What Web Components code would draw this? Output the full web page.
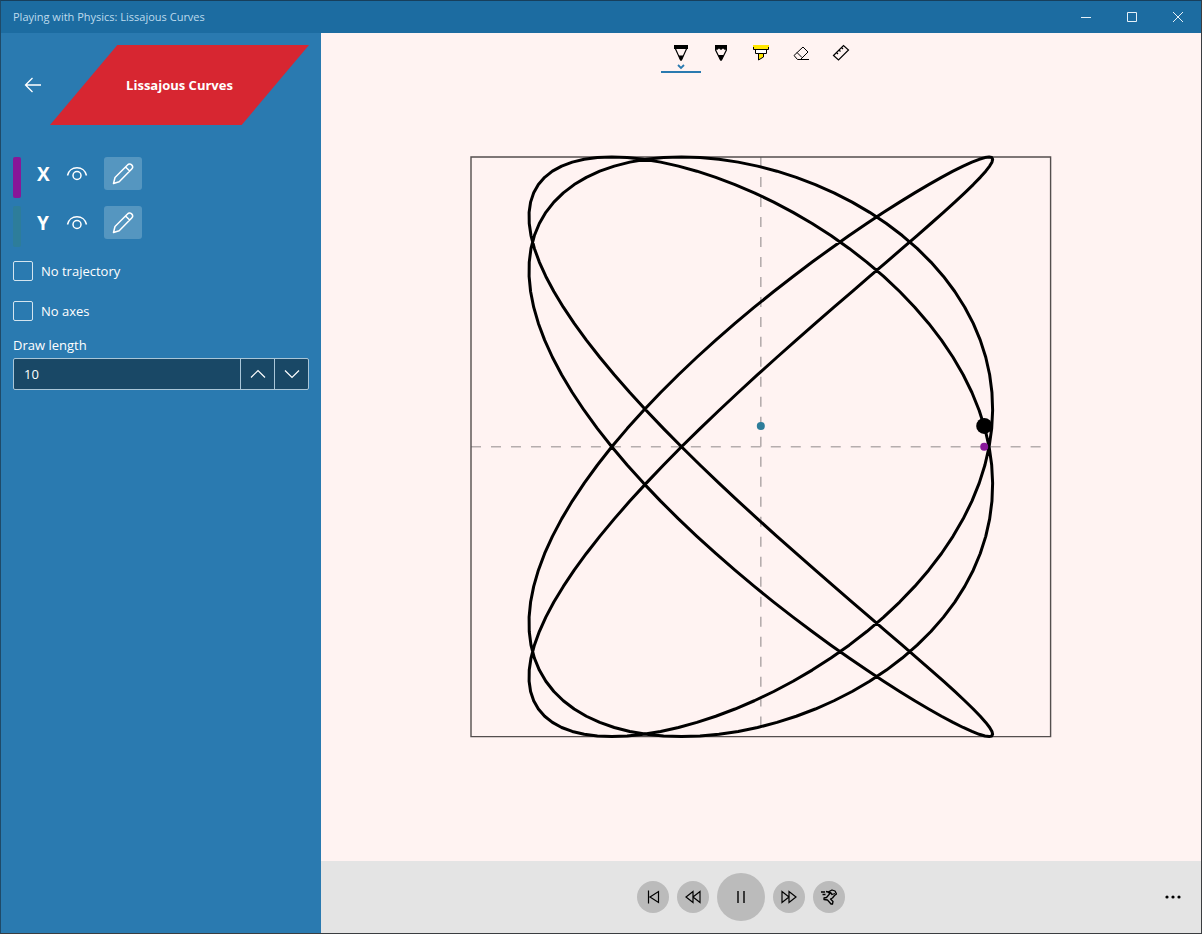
<!DOCTYPE html>
<html lang="en">
<head>
<meta charset="utf-8">
<title>Playing with Physics: Lissajous Curves</title>
<style>
html, body {
	height:100%;
	margin:0;
}
body {
	font-family:"Open Sans","Noto Sans",sans-serif;
	font-size:13px;
	line-height:20px;
	color:#fff;
}
</style>
</head>
<body>
<app-window caption="Playing with Physics: Lissajous Curves">
	<side-panel slot="side" heading="Lissajous Curves">
		<axis-row name="X" style="--axis-color:#881798"></axis-row>
		<axis-row name="Y" style="--axis-color:#2d7d9a"></axis-row>
		<check-option>No trajectory</check-option>
		<check-option>No axes</check-option>
		<number-stepper label="Draw length" value="10"></number-stepper>
	</side-panel>
	<ink-toolbar slot="tools"></ink-toolbar>
	<lissajous-plot slot="plot" x-frequency="4" y-frequency="3" phase="10"></lissajous-plot>
	<playback-bar slot="playback"></playback-bar>
</app-window>

<script>
const buttonReset = `
button {
	display:grid;
	place-items:center;
	margin:0;
	padding:0;
	border:0;
	background:none;
	color:inherit;
	font:inherit;
}
svg {
	display:block;
	fill:none;
	stroke:currentColor;
}`;

class BaseElement extends HTMLElement {
	constructor() {
		super();
		const template = document.createElement('template');
		template.innerHTML = this.template;
		this.attachShadow({mode: 'open'}).appendChild(template.content.cloneNode(true));
	}
}

class AppWindow extends BaseElement {
	get template() {
		return `
		<style>
		${buttonReset}
		:host {
			display:grid;
			grid-template:32px minmax(0, 1fr) 72px / 320px minmax(0, 1fr);
			box-sizing:border-box;
			height:100%;
			border:1px solid #3a3d40;
			border-top-color:#173f5c;
			border-left-color:#1f4a68;
			background:#fff3f2;
		}
		header {
			grid-column:1 / 3;
			display:flex;
			align-items:center;
			background:#1c6ca1;
			color:#bedbed;
			font-size:11px;
		}
		h1 {
			flex:1;
			margin:0;
			padding-left:12px;
			font-size:inherit;
			font-weight:normal;
		}
		header button {
			width:46px;
			height:32px;
			color:#e6f1f8;
		}
		aside {
			grid-row:2 / 4;
			background:#2a7ab0;
		}
		main {
			display:grid;
			grid-template:minmax(0, 1fr) / minmax(0, 1fr);
		}
		::slotted([slot=tools]), ::slotted([slot=plot]) {
			grid-area:1 / 1;
		}
		</style>
		<header>
			<h1></h1>
			<button aria-label="Minimize"><svg width="12" height="12"><path d="M1 6.5h10"/></svg></button>
			<button aria-label="Maximize"><svg width="12" height="12"><path d="M1.5 1.5h9v9h-9z"/></svg></button>
			<button aria-label="Close"><svg width="12" height="12"><path d="M1 1l10 10M11 1L1 11"/></svg></button>
		</header>
		<aside><slot name="side"></slot></aside>
		<main>
			<slot name="plot"></slot>
			<slot name="tools"></slot>
		</main>
		<slot name="playback"></slot>`;
	}

	connectedCallback() {
		this.shadowRoot.querySelector('h1').textContent = this.getAttribute('caption');
	}
}

class SidePanel extends BaseElement {
	get template() {
		return `
		<style>
		${buttonReset}
		:host {
			display:block;
			padding:12px;
		}
		header {
			display:flex;
			align-items:center;
			margin-bottom:32px;
		}
		header button {
			width:37px;
			height:40px;
		}
		h2 {
			flex:1;
			margin:0;
			background:#d72631;
			clip-path:polygon(26% 0, 100% 0, 74% 100%, 0 100%);
			font-size:13px;
			font-weight:bold;
			line-height:80px;
			text-align:center;
		}
		section {
			display:flex;
			flex-direction:column;
			gap:8px;
		}
		</style>
		<header>
			<button aria-label="Back"><svg width="20" height="18"><path d="M19 9H3.500M10.500 2l-7 7 7 7" stroke-width="1.300"/></svg></button>
			<h2></h2>
		</header>
		<section><slot></slot></section>`;
	}

	connectedCallback() {
		this.shadowRoot.querySelector('h2').textContent = this.getAttribute('heading');
	}
}

class AxisRow extends BaseElement {
	get template() {
		return `
		<style>
		${buttonReset}
		:host {
			display:flex;
			align-items:flex-start;
			height:41px;
		}
		i {
			align-self:stretch;
			width:8px;
			margin-right:16px;
			border-radius:2px;
			background:var(--axis-color);
		}
		b {
			width:12px;
			margin-right:12px;
			font-size:19px;
			line-height:34px;
		}
		button {
			width:32px;
			height:33px;
		}
		.edit {
			width:38px;
			margin-left:11px;
			border-radius:3px;
			background:#5596c0;
		}
		</style>
		<i></i>
		<b></b>
		<button aria-label="Show axis point"><svg width="22" height="22" stroke-width="1.500"><circle cx="11" cy="12.500" r="4"/><path d="M1.500 12.500C2.500 7.500 6.500 4.800 11 4.800s8.500 2.700 9.500 7.700"/></svg></button>
		<button class="edit" aria-label="Edit axis"><svg width="22" height="22" stroke-width="1.500" stroke-linejoin="round"><path d="M1.500 20.500l1.500-6L15.500 2a2.800 2.800 0 0 1 4.200 4L7.200 18.800zM13.500 4l4.200 4"/></svg></button>`;
	}

	connectedCallback() {
		this.shadowRoot.querySelector('b').textContent = this.getAttribute('name');
	}
}

class CheckOption extends BaseElement {
	get template() {
		return `
		<style>
		:host {
			display:block;
			margin:6px 0;
		}
		label {
			display:flex;
			align-items:center;
			gap:8px;
		}
		input {
			appearance:none;
			box-sizing:border-box;
			width:20px;
			height:20px;
			margin:0;
			border:1px solid #d4e5ef;
			border-radius:2px;
		}
		input:checked {
			background:#fff;
		}
		</style>
		<label><input type="checkbox"><span><slot></slot></span></label>`;
	}
}

class NumberStepper extends BaseElement {
	get template() {
		return `
		<style>
		${buttonReset}
		:host {
			display:block;
		}
		label {
			display:block;
			margin-bottom:3px;
		}
		div {
			display:flex;
			box-sizing:border-box;
			height:32px;
			border:1px solid #a9c6d8;
			border-radius:2px;
			background:#194866;
		}
		input {
			flex:1;
			min-width:0;
			padding:0 10px;
			border:0;
			outline:0;
			background:none;
			color:inherit;
			font:inherit;
		}
		button {
			width:34px;
			border-left:1px solid #a9c6d8;
		}
		</style>
		<label for="value"></label>
		<div>
			<input id="value" type="text" inputmode="numeric">
			<button aria-label="Increase"><svg width="16" height="16"><path d="M1 11.500l7-7 7 7" stroke-width="1.200"/></svg></button>
			<button aria-label="Decrease"><svg width="16" height="16"><path d="M1 4.500l7 7 7-7" stroke-width="1.200"/></svg></button>
		</div>`;
	}

	connectedCallback() {
		const input = this.shadowRoot.querySelector('input');
		const [up, down] = this.shadowRoot.querySelectorAll('button');
		this.shadowRoot.querySelector('label').textContent = this.getAttribute('label');
		input.value = this.getAttribute('value');
		up.addEventListener('click', () => {
			input.value = Number(input.value) + 1;
		});
		down.addEventListener('click', () => {
			input.value = Math.max(0, Number(input.value) - 1);
		});
	}
}

class InkToolbar extends BaseElement {
	get template() {
		return `
		<style>
		${buttonReset}
		:host {
			display:flex;
			justify-content:center;
			align-self:start;
			color:#000;
		}
		button {
			box-sizing:border-box;
			width:40px;
			height:40px;
		}
		button[aria-pressed=true] {
			box-shadow:inset 0 -2px #2a7ab0;
		}
		</style>
		<button aria-label="Ballpoint pen" aria-pressed="true"><svg width="40" height="40"><path d="M13 12h14v4H13z" fill="#000" stroke="none"/><path d="M14.300 15.500L19.500 27h1l5.200-11.500" stroke-width="1.200"/><path d="M17.500 22.500h5l-2 5h-1z" fill="#000" stroke="none"/><path d="M17 32l3 3 3-3" stroke="#2a7ab0" stroke-width="1.800"/></svg></button>
		<button aria-label="Pencil"><svg width="40" height="40"><path d="M14 12h12v4l-2 1-2-1.500-2 1.500-2-1.500-2 1.500-2-1z" fill="#000" stroke="none"/><path d="M14.600 15v2l4.900 10h1l4.900-10v-2" stroke-width="1.200"/><path d="M17 22h6l-2.500 5.500h-1z" fill="#000" stroke="none"/></svg></button>
		<button aria-label="Highlighter"><svg width="40" height="40"><path d="M14.500 16v4.500h11V16" fill="#fff"/><path d="M17.500 20.500v6.500l5-3v-3.500z" fill="#ffe600"/><path d="M12 12h16v4H12z" fill="#ffe600" stroke="none"/><path d="M12.500 14v2.500h15V14"/></svg></button>
		<button aria-label="Eraser"><svg width="40" height="40"><path d="M13 22.500l9-8.500 5 5-7.500 7.500h-3zM16 19.500l5 5M17 26.500h11"/></svg></button>
		<button aria-label="Ruler"><svg width="40" height="40"><path d="M12.500 22.500l10-10 5 4.500-10 10zM15.500 19.500l1.500 1.500M18 17l1.500 1.500M20.500 14.500l1.500 1.500" stroke-width="1.200"/></svg></button>`;
	}
}

class LissajousPlot extends BaseElement {
	get template() {
		return `
		<style>
		:host {
			display:grid;
			grid-template-rows:100%;
			place-items:center;
			height:100%;
		}
		svg {
			height:70%;
			max-width:100%;
			overflow:visible;
			fill:none;
		}
		.axes {
			stroke:#b5adad;
			stroke-dasharray:10;
		}
		.frame {
			stroke:#544e4e;
		}
		.curve {
			stroke:#000;
			stroke-width:3px;
			stroke-linejoin:round;
		}
		</style>
		<svg viewBox="-290 -290 580 580" role="img" aria-label="Lissajous curve">
			<path class="axes" stroke-width="1.600" d="M-290 0H290M0 -290V290"/>
			<path class="frame" stroke-width="1.400" d="M-290 -290H290V290H-290z"/>
			<path class="curve"/>
			<circle class="point" r="8" fill="#000"/>
			<circle class="x-point" r="4" fill="#881798"/>
			<circle class="y-point" r="4" fill="#2d7d9a"/>
		</svg>`;
	}

	// t runs over one full period, 0 to 2 pi
	position(t) {
		const a = Number(this.getAttribute('x-frequency'));
		const b = Number(this.getAttribute('y-frequency'));
		const phase = Number(this.getAttribute('phase')) * Math.PI / 180;
		return [232 * Math.cos(a * t + phase), -290 * Math.sin(b * t)];
	}

	move(selector, x, y) {
		const point = this.shadowRoot.querySelector(selector);
		point.setAttribute('cx', x);
		point.setAttribute('cy', y);
	}

	connectedCallback() {
		const steps = 300;
		const points = [];
		for (let i = 0; i < steps; i++) {
			points.push(this.position(i * 2 * Math.PI / steps).map(n => n.toFixed(2)).join(' '));
		}
		this.shadowRoot.querySelector('.curve').setAttribute('d', `M${points.join('L')}z`);

		const [x, y] = this.position(0.024);
		this.move('.point', x, y);
		this.move('.x-point', x, 0);
		this.move('.y-point', 0, y);
	}
}

class PlaybackBar extends BaseElement {
	get template() {
		return `
		<style>
		${buttonReset}
		:host {
			display:flex;
			align-items:center;
			background:#e4e4e4;
			color:#000;
		}
		div {
			flex:1;
			display:flex;
			align-items:center;
			justify-content:center;
			gap:8px;
		}
		div button {
			width:32px;
			height:32px;
			border-radius:50%;
			background:#bbb;
		}
		div .play {
			width:48px;
			height:48px;
		}
		.more {
			box-sizing:border-box;
			width:40px;
			height:48px;
			padding-right:16px;
		}
		.more svg {
			fill:#000;
			stroke:none;
		}
		</style>
		<div>
			<button aria-label="Restart"><svg width="16" height="16" stroke-width="1.200"><path d="M3.500 1.500v13M13.500 2.500v11L5 8z"/></svg></button>
			<button aria-label="Slower"><svg width="16" height="16" stroke-width="1.200"><path d="M8 2.500v11L1 8zM15 2.500v11L8 8z"/></svg></button>
			<button class="play" aria-label="Pause"><svg width="16" height="16" stroke-width="1.400"><path d="M5 2v12M11 2v12"/></svg></button>
			<button aria-label="Faster"><svg width="16" height="16" stroke-width="1.200"><path d="M1 2.500v11L8 8zM8 2.500v11L15 8z"/></svg></button>
			<button aria-label="Slow motion"><svg width="16" height="16" stroke-width="1.300" stroke-linejoin="round"><path d="M0 3h4M1.500 5.500h3M5 2.500l2 .500 4-2 3 1 1.500 3-2 1.500-2 2.500-2 1 2.500 2.500-.500 2.500h-1.500l-3.500-4-3.500-.500L3 9l2.500-.500L8 5.500l1.500-2H7M9.500 3.500l1.500 2 3-1"/></svg></button>
		</div>
		<button class="more" aria-label="More"><svg width="18" height="4"><circle cx="3" cy="2" r="1.600"/><circle cx="9" cy="2" r="1.600"/><circle cx="15" cy="2" r="1.600"/></svg></button>`;
	}
}

window.customElements.define('app-window', AppWindow);
window.customElements.define('side-panel', SidePanel);
window.customElements.define('axis-row', AxisRow);
window.customElements.define('check-option', CheckOption);
window.customElements.define('number-stepper', NumberStepper);
window.customElements.define('ink-toolbar', InkToolbar);
window.customElements.define('lissajous-plot', LissajousPlot);
window.customElements.define('playback-bar', PlaybackBar);
</script>
</body>
</html>
